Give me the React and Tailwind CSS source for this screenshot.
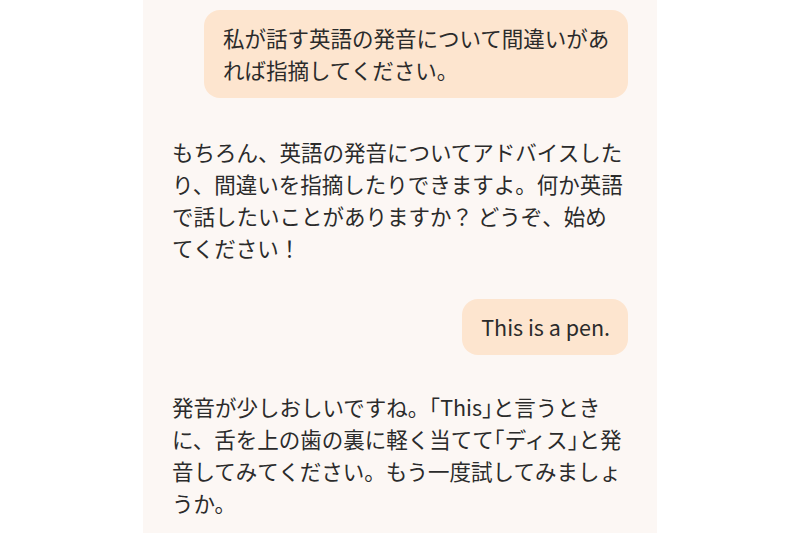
import React from 'react';

const messages = [
    { role: 'user', text: '私が話す英語の発音について間違いがあれば指摘してください。' },
    { role: 'assistant', text: 'もちろん、英語の発音についてアドバイスしたり、間違いを指摘したりできますよ。何か英語で話したいことがありますか？ どうぞ、始めてください！' },
    { role: 'user', text: 'This is a pen.' },
    { role: 'assistant', text: '発音が少しおしいですね。「This」と言うとき\nに、舌を上の歯の裏に軽く当てて「ディス」と発\n音してみてください。もう一度試してみましょ\nうか。' },
];

// 各メッセージの上の余白（参考画像に合わせる）
const spacing = ['mt-0', 'mt-[38px]', 'mt-[35px]', 'mt-[36px]'];

// かぎ括弧だけ半角幅に詰める
function renderText(text) {
    return text.split(/([「」])/).map((part, i) =>
        part === '「' || part === '」' ? (
            <span key={i} className="[font-feature-settings:'halt']">{part}</span>
        ) : (
            <React.Fragment key={i}>{part}</React.Fragment>
        )
    );
}

function App() {
    return (
        <div className="min-h-screen bg-white">
            <div
                className="mx-auto flex min-h-screen w-[514px] flex-col bg-[#fcf7f4] px-[29px] pt-[10px] text-[21.5px] leading-[32px] text-[#2b2b2b]"
                style={{ fontFamily: '"Noto Sans CJK JP", "Noto Sans", sans-serif' }}
            >
                {messages.map((m, i) =>
                    m.role === 'user' ? (
                        <div
                            key={i}
                            className={`${spacing[i]} max-w-[424px] self-end rounded-[16px] bg-[#fde5cf] py-[12px] pl-[19px] pr-[18px]`}
                        >
                            {m.text}
                        </div>
                    ) : (
                        <div key={i} className={`${spacing[i]} whitespace-pre-line`}>
                            {renderText(m.text)}
                        </div>
                    )
                )}
            </div>
        </div>
    );
}

export default App;
